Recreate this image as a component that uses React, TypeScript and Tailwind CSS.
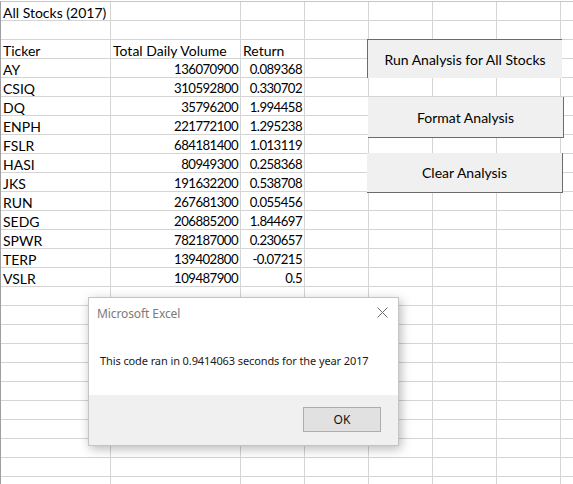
import React from "react";

const COLS = [110, 130, 64, 64, 64, 64, 64, 64, 64];
const NROWS = 26;

type Cell = { t: string; right?: boolean };

const data: [string, string, string][] = [
  ["AY", "136070900", "0.089368"],
  ["CSIQ", "310592800", "0.330702"],
  ["DQ", "35796200", "1.994458"],
  ["ENPH", "221772100", "1.295238"],
  ["FSLR", "684181400", "1.013119"],
  ["HASI", "80949300", "0.258368"],
  ["JKS", "191632200", "0.538708"],
  ["RUN", "267681300", "0.055456"],
  ["SEDG", "206885200", "1.844697"],
  ["SPWR", "782187000", "0.230657"],
  ["TERP", "139402800", "-0.07215"],
  ["VSLR", "109487900", "0.5"],
];

function rowCells(r: number): Cell[] {
  if (r === 0) return [{ t: "All Stocks (2017)" }];
  if (r === 2) return [{ t: "Ticker" }, { t: "Total Daily Volume" }, { t: "Return" }];
  if (r >= 3 && r < 3 + data.length) {
    const d = data[r - 3];
    return [{ t: d[0] }, { t: d[1], right: true }, { t: d[2], right: true }];
  }
  return [];
}

export default function App() {
  const rows = Array.from({ length: NROWS }, (_, i) => i);
  return (
    <div
      className="relative w-[573px] h-[484px] overflow-hidden bg-white text-black"
      style={{ fontFamily: "Lato, 'Liberation Sans', sans-serif" }}
    >
      <div className="pt-[1px]">
        <div className="border-t border-l border-t-[#c6c6c6] border-l-[#9e9e9e] w-[700px]">
          {rows.map((r) => {
            const cells = rowCells(r);
            return (
              <div key={r} className="flex h-[19px]">
                {COLS.map((w, c) => {
                  const cell = cells[c];
                  return (
                    <div
                      key={c}
                      className={
                        "shrink-0 h-[19px] border-r border-b border-[#d4d4d4] pt-[2px] leading-[17px] whitespace-nowrap overflow-visible " +
                        (cell && cell.right
                          ? "text-right pr-[2px] text-[13.2px] tracking-[-0.55px]"
                          : "pl-[2px] text-[14px]")
                      }
                      style={{ width: w }}
                    >
                      {cell ? cell.t : ""}
                    </div>
                  );
                })}
              </div>
            );
          })}
        </div>
      </div>

      {/* Buttons */}
      <div className="absolute left-[367px] top-[39px] w-[195px] h-[39px] bg-[#f0f0f0] border-t border-l border-[#6b6b6b] flex items-center justify-center text-[14px]">
        Run Analysis for All Stocks
      </div>
      <div className="absolute left-[368px] top-[97px] w-[196px] h-[41px] bg-[#f0f0f0] border-r border-b border-[#6b6b6b] flex items-center justify-center text-[14px]">
        Format Analysis
      </div>
      <div className="absolute left-[367px] top-[153px] w-[196px] h-[40px] bg-[#f0f0f0] border-r border-b border-[#6b6b6b] flex items-center justify-center text-[14px]">
        Clear Analysis
      </div>

      {/* Dialog */}
      <div
        className="absolute left-[88px] top-[297px] w-[311px] h-[149px] bg-white border border-[#c4c4c4] shadow-[2px_3px_10px_rgba(0,0,0,0.28)] flex flex-col"
        style={{ fontFamily: "'Noto Sans', 'Open Sans', sans-serif" }}
      >
        <div className="h-[31px] flex items-center justify-between pl-[8px] pr-[10px]">
          <span className="text-[12px] text-[#7b7b7b] tracking-[-0.1px]">Microsoft Excel</span>
          <svg width="11" height="11" viewBox="0 0 11 11" className="mt-[-2px]">
            <path d="M0.5 0.5 L10.5 10.5 M10.5 0.5 L0.5 10.5" stroke="#6a6a6a" strokeWidth="1" />
          </svg>
        </div>
        <div className="flex-1 bg-white pl-[11px] pt-[24px] text-[11px] text-[#1a1a1a] tracking-[-0.1px]">
          This code ran in 0.9414063 seconds for the year 2017
        </div>
        <div className="h-[50px] bg-[#f0f0f0] flex justify-end items-start pt-[12px] pr-[17px]">
          <div className="w-[78px] h-[25px] border border-[#adadad] bg-[#e1e1e1] flex items-center justify-center text-[12px] text-[#111]">
            OK
          </div>
        </div>
      </div>
    </div>
  );
}
